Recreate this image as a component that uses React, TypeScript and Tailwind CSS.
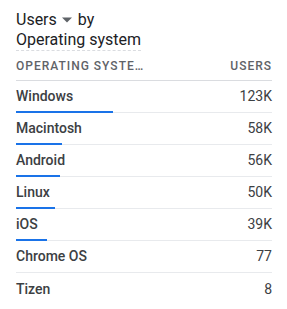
const rows = [
  { name: "Windows", value: "123K", bar: 97 },
  { name: "Macintosh", value: "58K", bar: 46 },
  { name: "Android", value: "56K", bar: 44 },
  { name: "Linux", value: "50K", bar: 39 },
  { name: "iOS", value: "39K", bar: 31 },
  { name: "Chrome OS", value: "77", bar: 0 },
  { name: "Tizen", value: "8", bar: 0 },
];

export default function App() {
  return (
    <div className="w-[287px] h-[309px] bg-white pl-4 pr-[15px] pt-[10px] font-['Roboto',sans-serif] text-[#202124]">
      {/* Title */}
      <div className="text-[16px] leading-[20px]">
        <div className="flex items-center">
          <span>Users</span>
          <svg className="w-[10px] h-[10px] ml-[5px] mr-[6px]" viewBox="0 0 10 10">
            <path d="M0 2.5h10L5 7.5z" fill="#5f6368" />
          </svg>
          <span>by</span>
        </div>
        <div className="inline-block border-b border-dashed border-[#dadce0] pb-0">Operating system</div>
      </div>

      {/* Header */}
      <div className="flex items-center justify-between h-[30px] border-b border-[#dadce0] text-[12px] tracking-[1px] text-[#5f6368] font-medium uppercase">
        <span>Operating syste…</span>
        <span>Users</span>
      </div>

      {/* Rows */}
      {rows.map((r, i) => (
        <div
          key={r.name}
          className={`relative flex items-center justify-between h-[32px] text-[14px] ${i < rows.length - 1 ? "border-b border-[#e8eaed]" : ""}`}
        >
          <span className="font-medium text-[#3c4043]">{r.name}</span>
          <span className="text-[#3c4043]">{r.value}</span>
          {r.bar > 0 && (
            <div className="absolute left-0 bottom-[-1px] h-[2px] bg-[#1a73e8]" style={{ width: r.bar }} />
          )}
        </div>
      ))}
    </div>
  );
}
